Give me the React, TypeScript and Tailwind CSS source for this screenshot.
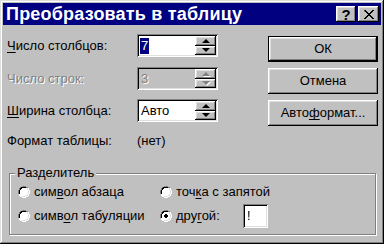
import React from "react";

const raised =
  "bg-[#c0c0c0] shadow-[inset_-1px_-1px_#000,inset_1px_1px_#fff,inset_-2px_-2px_#808080,inset_2px_2px_#dfdfdf]";
const sunken =
  "shadow-[inset_1px_1px_#808080,inset_-1px_-1px_#fff,inset_2px_2px_#000,inset_-2px_-2px_#dfdfdf]";

function Arrow({ up, disabled }: { up?: boolean; disabled?: boolean }) {
  const pts = up ? "0,4 4,0 8,4" : "0,0 8,0 4,4";
  return (
    <svg width="9" height="6" viewBox="0 0 9 6" className="block">
      {disabled && <polygon points={pts} transform="translate(1,1)" fill="#fff" />}
      <polygon points={pts} fill={disabled ? "#808080" : "#000"} />
    </svg>
  );
}

function Spinner({ disabled }: { disabled?: boolean }) {
  return (
    <div className="flex flex-col w-[21px] h-[19px] mr-[2px]">
      <div className={`${raised} flex-1 flex items-center justify-center pl-[1px] pt-[1px]`}>
        <Arrow up disabled={disabled} />
      </div>
      <div className={`${raised} flex-1 flex items-center justify-center pl-[1px]`}>
        <Arrow disabled={disabled} />
      </div>
    </div>
  );
}

function SpinField({
  children,
  disabled,
}: {
  children: React.ReactNode;
  disabled?: boolean;
}) {
  return (
    <div
      className={`${sunken} ${disabled ? "bg-[#c0c0c0]" : "bg-white"} w-[81px] h-[23px] flex items-center pl-[3px]`}
    >
      <div className="flex-1 flex items-center">{children}</div>
      <Spinner disabled={disabled} />
    </div>
  );
}

function Radio({ checked }: { checked?: boolean }) {
  return (
    <svg width="12" height="12" viewBox="0 0 12 12" className="block shrink-0">
      <path d="M4 0h4v1h2v1h1v2h1v4h-1v2h-1v1h-2v1h-4v-1h-2v-1h-1v-2h-1v-4h1v-2h1v-1h2z" fill="#fff" />
      <path d="M4 0h4v1h2v1h-2v-1h-4v1h-2v2h-1v4h-1v-4h1v-2h1v-1h2z" fill="#808080" />
      <path d="M4 1h4v1h-4v1h-1v1h-1v4h-1v-4h1v-2h1v-1h1z" fill="#000" />
      <path d="M9 2h1v2h1v4h-1v2h-2v1h-4v-1h4v-1h1v-1h1v-4h-1z" fill="#dfdfdf" />
      {checked && <path d="M5 4h2v1h1v2h-1v1h-2v-1h-1v-2h1z" fill="#000" />}
    </svg>
  );
}

function U({ children }: { children: React.ReactNode }) {
  return <span className="underline underline-offset-[2px] decoration-[1px]">{children}</span>;
}

export default function App() {
  return (
    <div
      className="w-[384px] h-[244px] bg-[#c0c0c0] p-[3px] flex flex-col text-[13px] text-black shadow-[inset_-1px_-1px_#000,inset_1px_1px_#dfdfdf,inset_-2px_-2px_#808080,inset_2px_2px_#fff]"
      style={{ fontFamily: '"Liberation Sans", Arial, sans-serif' }}
    >
      {/* title bar */}
      <div className="h-[22px] bg-[#000080] flex items-center pl-[3px] pr-[2px]">
        <div className="flex-1 text-white font-bold text-[18px] leading-none tracking-[0.2px]">
          Преобразовать в таблицу
        </div>
        <div className={`${raised} w-[20px] h-[16px] flex items-center justify-center text-[15px] font-bold leading-none`}>
          ?
        </div>
        <div className={`${raised} w-[21px] h-[16px] ml-[2px] flex items-center justify-center`}>
          <svg width="10" height="9" viewBox="0 0 10 9">
            <path d="M0 0h2v1h1v1h1v1h2v-1h1v-1h1v-1h2v1h-1v1h-1v1h-1v1h-1v1h1v1h1v1h1v1h1v1h-2v-1h-1v-1h-1v-1h-2v1h-1v1h-1v1h-2v-1h1v-1h1v-1h1v-1h1v-1h-1v-1h-1v-1h-1z" fill="#000" />
          </svg>
        </div>
      </div>

      {/* body */}
      <div className="flex pt-[9px]">
        <div className="flex flex-col pl-[4px] w-[219px]">
          <div className="flex items-center h-[23px]">
            <div className="w-[130px] pt-[1px]">
              <U>Ч</U>исло столбцов:
            </div>
            <SpinField>
              <span className="bg-[#000080] text-white px-[1px] leading-[16px]">7</span>
            </SpinField>
          </div>
          <div className="flex items-center h-[23px] mt-[10px]">
            <div className="w-[130px] pt-[1px] text-[#808080] [text-shadow:1px_1px_0_#fff]">Число строк:</div>
            <SpinField disabled>
              <span className="text-[#808080] [text-shadow:1px_1px_0_#fff] pl-[1px]">3</span>
            </SpinField>
          </div>
          <div className="flex items-center h-[23px] mt-[9px]">
            <div className="w-[130px] pt-[1px]">
              <U>Ш</U>ирина столбца:
            </div>
            <SpinField>
              <span className="pl-[1px]">Авто</span>
            </SpinField>
          </div>
          <div className="flex items-center h-[23px] mt-[7px]">
            <div className="w-[130px]">Формат таблицы:</div>
            <div>(нет)</div>
          </div>
        </div>
        <div className="flex flex-col ml-[46px] pt-[2px] gap-[6px]">
          <div className="w-[110px] h-[26px] bg-black p-[1px]">
            <div className={`${raised} w-full h-full flex items-center justify-center`}>ОК</div>
          </div>
          <div className={`${raised} w-[110px] h-[26px] flex items-center justify-center`}>Отмена</div>
          <div className={`${raised} w-[110px] h-[26px] flex items-center justify-center`}>
            <span>
              Авто<U>ф</U>ормат...
            </span>
          </div>
        </div>
      </div>

      {/* group box */}
      <div className="relative ml-[6px] mt-[21px] w-[367px] h-[62px] border border-[#808080] shadow-[1px_1px_#fff,inset_1px_1px_#fff]">
        <div className="absolute left-[5px] top-[-10px] bg-[#c0c0c0] px-[2px] leading-[18px]">Разделитель</div>
        <div className="grid grid-cols-[142px_1fr] pl-[8px] pt-[9px] gap-y-[6px]">
          <div className="flex items-center gap-[4px] h-[18px]">
            <Radio />
            <span>
              сим<U>в</U>ол абзаца
            </span>
          </div>
          <div className="flex items-center gap-[4px] h-[18px]">
            <Radio />
            <span>
              точ<U>к</U>а с запятой
            </span>
          </div>
          <div className="flex items-center gap-[4px] h-[18px]">
            <Radio />
            <span>
              симв<U>о</U>л табуляции
            </span>
          </div>
          <div className="flex items-center gap-[4px] h-[18px]">
            <Radio checked />
            <span className="w-[63px]">
              дру<U>г</U>ой:
            </span>
            <div className={`${sunken} bg-white w-[25px] h-[24px] flex items-center pl-[4px]`}>
              <span className="inline-block opacity-[0.99] will-change-transform">!</span>
            </div>
          </div>
        </div>
      </div>
    </div>
  );
}
